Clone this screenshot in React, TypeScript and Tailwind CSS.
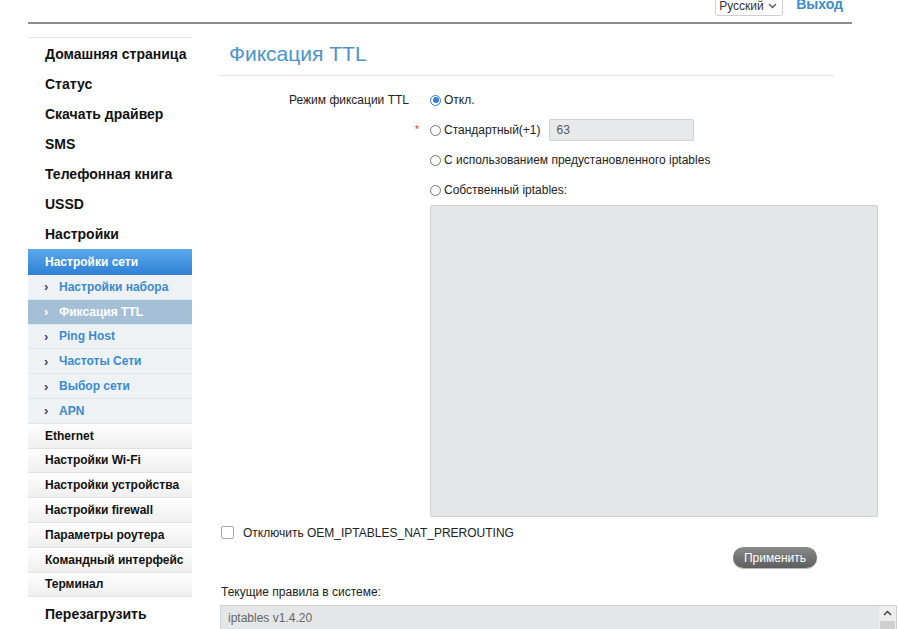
import React from "react";

const topItems = ["Домашняя страница", "Статус", "Скачать драйвер", "SMS", "Телефонная книга", "USSD", "Настройки"];
const subItems = ["Настройки набора", "Фиксация TTL", "Ping Host", "Частоты Сети", "Выбор сети", "APN"];
const grayItems = ["Ethernet", "Настройки Wi-Fi", "Настройки устройства", "Настройки firewall", "Параметры роутера", "Командный интерфейс", "Терминал"];

function Radio({ checked }: { checked?: boolean }) {
  if (checked) {
    return (
      <span className="w-[11px] h-[11px] rounded-full border border-[#2f7ed8] bg-white flex items-center justify-center shrink-0">
        <span className="w-[6px] h-[6px] rounded-full bg-[#2f7ed8]" />
      </span>
    );
  }
  return <span className="w-[11px] h-[11px] rounded-full border border-[#777] bg-white shrink-0" />;
}

export default function App() {
  return (
    <div className="w-[900px] h-[629px] overflow-hidden bg-white font-['Liberation_Sans',Arial,sans-serif] text-[#222]">
      {/* header */}
      <div className="ml-[28px] w-[824px] h-[24px] border-b-2 border-[#8c8c8c] flex justify-end items-start">
        <div className="mt-[-5px] h-[21px] w-[68px] border border-[#cfcfcf] rounded-[3px] flex items-center justify-between pl-[3px] pr-[5px] text-[12px] text-[#333] bg-white">
          <span>Русский</span>
          <svg width="9" height="6" viewBox="0 0 9 6"><path d="M1 1l3.5 3.5L8 1" fill="none" stroke="#555" strokeWidth="1.3" /></svg>
        </div>
        <div className="ml-[13px] mr-[9px] mt-[-5px] text-[14px] font-bold text-[#3b8bd0] leading-[18px]">Выход</div>
      </div>

      <div className="flex ml-[28px]">
        {/* sidebar */}
        <div className="w-[164px] mt-[13px] border-t border-[#e6e6e6] shrink-0">
          <div className="h-[1px]" />
          {topItems.map((t) => (
            <div key={t} className="h-[30px] flex items-center pl-[17px] text-[14px] font-bold text-[#111]">{t}</div>
          ))}
          <div className="h-[26px] flex items-center pl-[17px] text-[12px] font-bold text-white bg-gradient-to-b from-[#5aa8ea] to-[#2f80d6]">Настройки сети</div>
          {subItems.map((t, i) => {
            const active = i === 1;
            return (
              <div
                key={t}
                className={
                  active
                    ? "h-[24.8px] flex items-center pl-[16px] text-[12px] font-bold text-white bg-[#a4bfd6] border-b border-[#dfe5ea]"
                    : "h-[24.8px] flex items-center pl-[16px] text-[12px] font-bold text-[#3b8bd0] bg-[#eef2f5] border-b border-[#dfe5ea]"
                }
              >
                <span className={active ? "w-[15px] text-white text-[13px] font-bold leading-none" : "w-[15px] text-[#4a3a6e] text-[13px] font-bold leading-none"}>›</span>
                <span>{t}</span>
              </div>
            );
          })}
          {grayItems.map((t) => (
            <div key={t} className="h-[24.8px] flex items-center pl-[17px] text-[12px] font-bold text-[#111] bg-gradient-to-b from-white to-[#efefef] border-b border-[#e2e2e2]">{t}</div>
          ))}
          <div className="h-[32px] pt-[3px] flex items-center pl-[17px] text-[14px] font-bold text-[#111]">Перезагрузить</div>
        </div>

        {/* main */}
        <div className="ml-[27px] flex-1">
          <div className="w-[615px] h-[52px] border-b border-[#e6e6e6] flex items-center pl-[10px] pt-[8px] text-[21px] text-[#4a93cf]">Фиксация TTL</div>

          <div className="pt-[9px] grid grid-cols-[211px_1fr] text-[12px] text-[#222]">
            <div className="h-[30px] flex items-center justify-end pr-[21px]">Режим фиксации TTL</div>
            <div className="h-[30px] flex items-center gap-[3px]"><Radio checked /><span>Откл.</span></div>

            <div className="h-[30px] flex items-start justify-end pr-[11px] pt-[7px] text-[#d33] text-[10px]">*</div>
            <div className="h-[30px] flex items-center gap-[3px]">
              <Radio />
              <span>Стандартный(+1)</span>
              <div className="ml-[5px] w-[145px] h-[22px] bg-[#e7e9eb] border border-[#d0d3d6] rounded-[2px] flex items-center pl-[7px] text-[#555]">63</div>
            </div>

            <div className="h-[30px]" />
            <div className="h-[30px] flex items-center gap-[3px]"><Radio /><span>С использованием предустановленного iptables</span></div>

            <div className="h-[30px]" />
            <div className="h-[30px] flex items-center gap-[3px]"><Radio /><span>Собственный iptables:</span></div>

            <div />
            <div className="w-[448px] h-[312px] bg-[#e4e6e8] border border-[#cdd0d3] rounded-[2px]" />
          </div>

          <div className="h-[30px] flex items-center pl-[2px] pt-[1px] text-[12px] text-[#222]">
            <span className="w-[13px] h-[13px] border border-[#a9a9a9] rounded-[2px] bg-white" />
            <span className="ml-[9px]">Отключить OEM_IPTABLES_NAT_PREROUTING</span>
          </div>

          <div className="ml-[514px] w-[84px] h-[21px] rounded-full bg-gradient-to-b from-[#8a8a8a] to-[#5e5e5e] text-white text-[12px] flex items-center justify-center shadow-[0_1px_1px_rgba(0,0,0,0.3)]">Применить</div>

          <div className="mt-[17px] pl-[2px] text-[12px] leading-[14px] text-[#222]">Текущие правила в системе:</div>

          <div className="mt-[6px] ml-[1px] w-[677px] h-[40px] bg-[#e4e6e8] border border-[#cdd0d3] flex">
            <div className="flex-1 pl-[7px] pt-[3px] text-[12px] text-[#666]">iptables v1.4.20</div>
            <div className="w-[17px] bg-[#eeeeee] flex flex-col items-center">
              <svg className="mt-[4px]" width="9" height="6" viewBox="0 0 9 6"><path d="M1 5l3.5-3.5L8 5" fill="none" stroke="#444" strokeWidth="1.5" /></svg>
              <div className="mt-[5px] w-[15px] h-[20px] bg-[#cfcfcf]" />
            </div>
          </div>
        </div>
      </div>
    </div>
  );
}
